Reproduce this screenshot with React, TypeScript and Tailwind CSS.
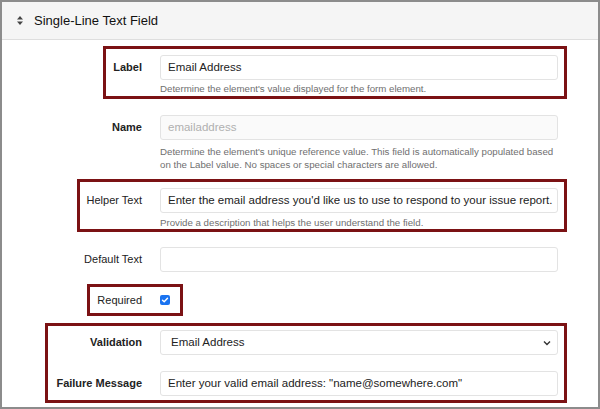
import React from "react";

const font = { fontFamily: '"Liberation Sans", Arial, Helvetica, sans-serif' };

function Input({ value, placeholder, disabled }: { value?: string; placeholder?: string; disabled?: boolean }) {
  return (
    <div
      className={`w-[398px] h-[25px] shrink-0 rounded-[3px] border border-[#e3e3e3] flex items-center px-[7px] whitespace-nowrap overflow-hidden text-[11.5px] ${
        disabled ? "bg-[#fafafa] text-[#b0b0b0]" : "bg-white text-[#222]"
      }`}
    >
      {value ?? placeholder ?? ""}
    </div>
  );
}

function Help({ children }: { children: React.ReactNode }) {
  return <div className="ml-[18px] text-[9.7px] leading-[12px] text-[#6f6f6f] whitespace-nowrap">{children}</div>;
}

export default function App() {
  return (
    <div style={font} className="w-[600px] h-[409px] border-2 border-[#8c8c8c] bg-white overflow-hidden box-border">
      {/* Header */}
      <div className="h-[38px] bg-[#f5f5f5] border-b border-[#dedede] flex items-center pl-[15px]">
        <svg width="6" height="9" viewBox="0 0 6 9" className="mr-[11px]">
          <path d="M3 0 L6 3.5 L0 3.5 Z" fill="#444" />
          <path d="M3 9 L6 5.5 L0 5.5 Z" fill="#444" />
        </svg>
        <span className="text-[13px] text-[#111]">Single-Line Text Field</span>
      </div>

      {/* Label box */}
      <div className="mt-[6px] ml-[101px] w-[464px] border-[3px] border-[#7b1214] pt-[6px] pb-[1px]">
        <div className="flex items-center">
          <div className="w-[36px] text-right text-[11px] font-bold text-[#222]">Label</div>
          <div className="ml-[18px]">
            <Input value="Email Address" />
          </div>
        </div>
        <div className="mt-[3px] pl-[36px]">
          <Help>Determine the element&apos;s value displayed for the form element.</Help>
        </div>
      </div>

      {/* Name */}
      <div className="mt-[16px] flex items-center">
        <div className="w-[140px] text-right text-[11px] font-bold text-[#222]">Name</div>
        <div className="ml-[18px]">
          <Input placeholder="emailaddress" disabled />
        </div>
      </div>
      <div className="mt-[5px] pl-[140px]">
        <div className="ml-[18px] text-[9.7px] leading-[13px] text-[#6f6f6f] whitespace-nowrap">
          Determine the element&apos;s unique reference value. This field is automatically populated based
          <br />
          on the Label value. No spaces or special characters are allowed.
        </div>
      </div>

      {/* Helper box */}
      <div className="mt-[8px] ml-[75px] w-[490px] border-[3px] border-[#7b1214] pt-[6px] pb-[0px]">
        <div className="flex items-center">
          <div className="w-[62px] text-right text-[11px] text-[#222]">Helper Text</div>
          <div className="ml-[18px]">
            <Input value="Enter the email address you'd like us to use to respond to your issue report." />
          </div>
        </div>
        <div className="mt-[4px] pl-[62px]">
          <Help>Provide a description that helps the user understand the field.</Help>
        </div>
      </div>

      {/* Default Text */}
      <div className="mt-[15px] flex items-center">
        <div className="w-[140px] text-right text-[11px] text-[#222]">Default Text</div>
        <div className="ml-[18px]">
          <Input value="" />
        </div>
      </div>

      {/* Required box */}
      <div className="mt-[12px] ml-[85px] w-[96px] h-[32px] border-[3px] border-[#7b1214] flex items-center">
        <div className="w-[52px] text-right text-[11px] text-[#222]">Required</div>
        <div className="ml-[18px] w-[10px] h-[10px] rounded-[2px] bg-[#1a73f0] flex items-center justify-center">
          <svg width="8" height="8" viewBox="0 0 8 8">
            <path d="M1.5 4.2 L3.2 5.8 L6.5 2.2" stroke="white" strokeWidth="1.4" fill="none" strokeLinecap="round" strokeLinejoin="round" />
          </svg>
        </div>
      </div>

      {/* Validation box */}
      <div className="mt-[7px] ml-[43px] w-[522px] border-[3px] border-[#7b1214] pt-[4px] pb-[4px]">
        <div className="flex items-center">
          <div className="w-[94px] text-right text-[11px] font-bold text-[#222]">Validation</div>
          <div className="ml-[18px]">
            <div className="w-[398px] h-[25px] rounded-[3px] border border-[#e3e3e3] bg-white flex items-center justify-between pl-[10px] pr-[6px] text-[11.5px] text-[#222]">
              <span>Email Address</span>
              <svg width="8" height="6" viewBox="0 0 8 6">
                <path d="M1 1.5 L4 4.5 L7 1.5" stroke="#333" strokeWidth="1.4" fill="none" />
              </svg>
            </div>
          </div>
        </div>
        <div className="mt-[16px] flex items-center">
          <div className="w-[94px] text-right text-[11px] font-bold text-[#222]">Failure Message</div>
          <div className="ml-[18px]">
            <Input value={'Enter your valid email address: "name@somewhere.com"'} />
          </div>
        </div>
      </div>
    </div>
  );
}
